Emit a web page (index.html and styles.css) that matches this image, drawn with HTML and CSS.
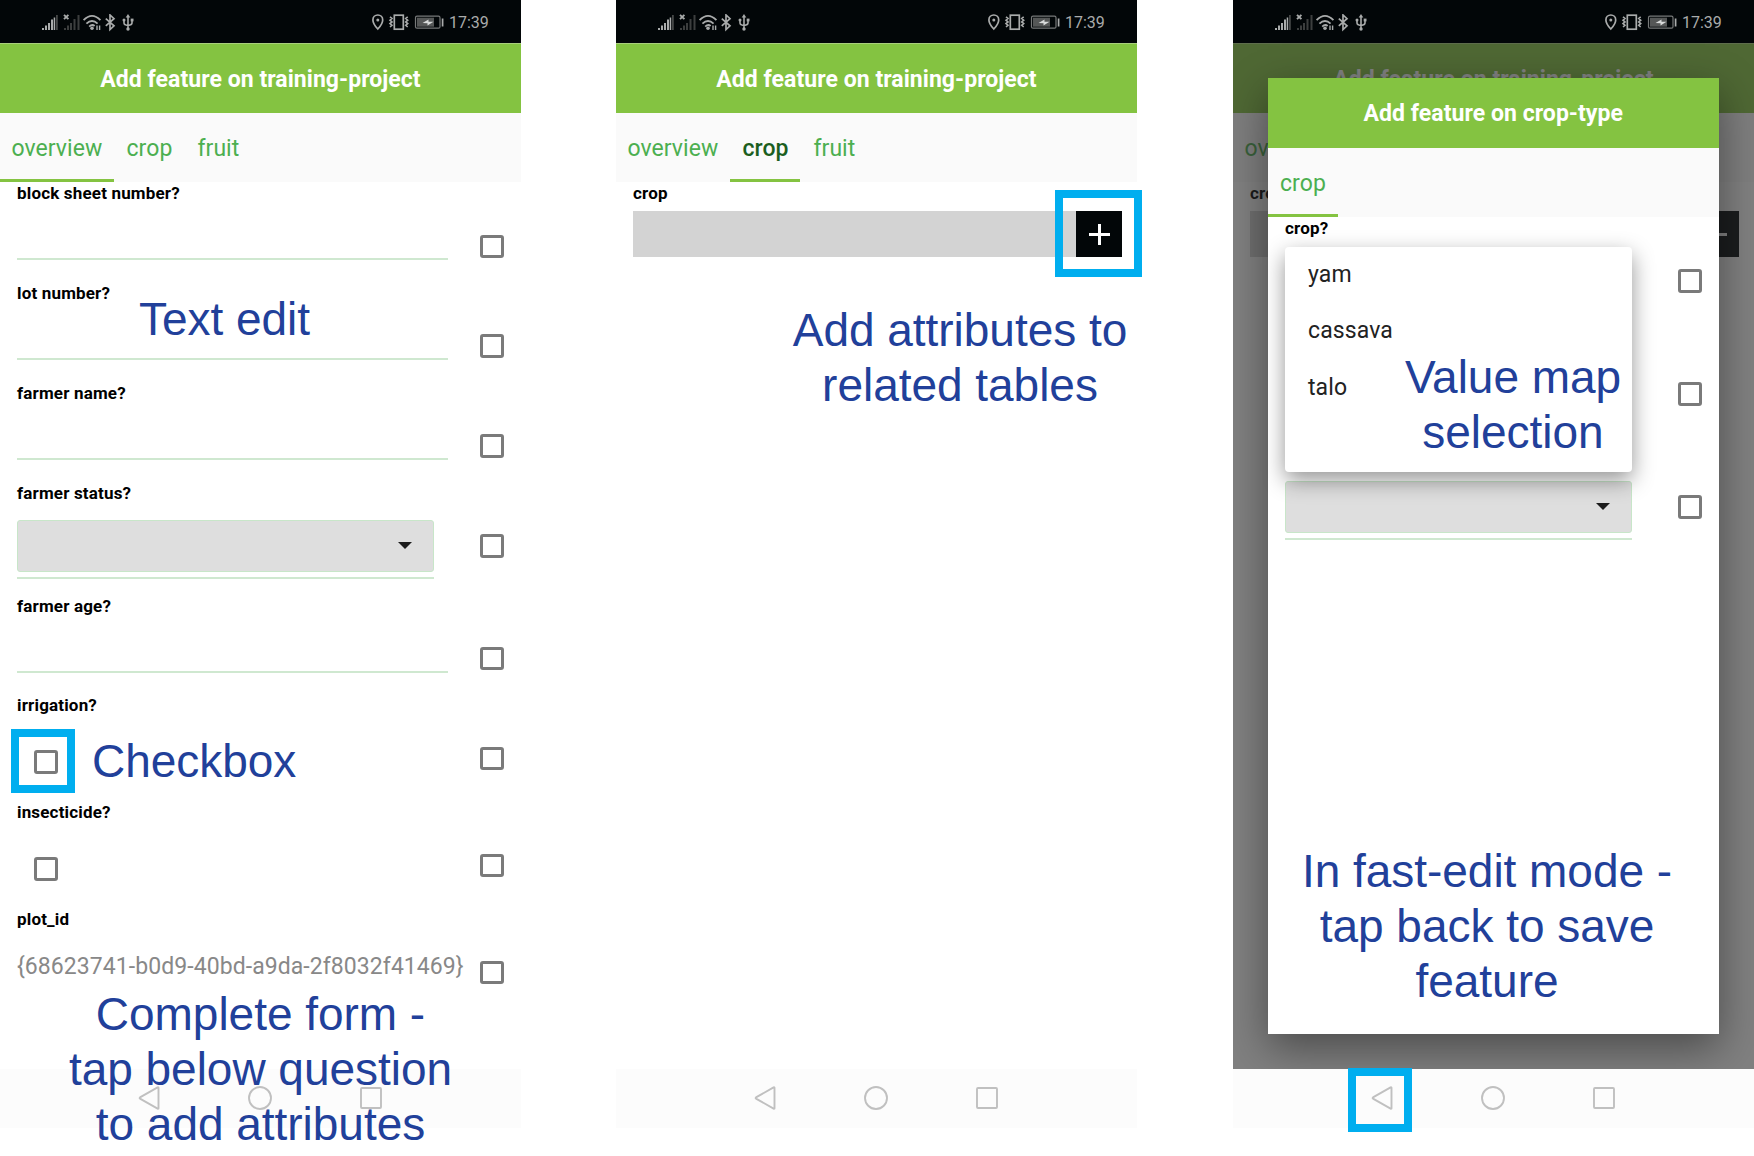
FILE: index.html
```html
<!DOCTYPE html>
<html lang="en">
<head>
<meta charset="utf-8">
<title>Add feature forms</title>
<link rel="stylesheet" href="styles.css">
</head>
<body>
<svg class="defs" aria-hidden="true">
  <symbol id="status-left" viewBox="0 0 96 18">
    <g fill="#a9abab">
      <rect x="0" y="14" width="2" height="2"/><rect x="3" y="11.5" width="2" height="4.500"/><rect x="6" y="9" width="2" height="7"/><rect x="9" y="5.500" width="2" height="10.500"/>
      <rect x="11.700" y="3.500" width="1.500" height="12.500"/>
    </g>
    <rect x="14" y="1" width="1.800" height="15" fill="#454747"/>
    <g fill="#3c3e3e">
      <rect x="22" y="14" width="2" height="2"/><rect x="25" y="11.500" width="2" height="4.500"/><rect x="28" y="9" width="2" height="7"/><rect x="31.500" y="5" width="2" height="11"/><rect x="35.500" y="1" width="2" height="15"/>
    </g>
    <g fill="none" stroke="#a9abab" stroke-width="1.600">
      <path d="M22 .8l4.400 4.400M26.400 .8L22 5.200" stroke-width="1.900"/>
      <path d="M41.600 6.200q8.400-8.600 16.800 0M44.400 9.600q5.600-5.200 11.200 0M47.200 12.600q3-2.800 5.400-.6" stroke-width="1.900"/>
      <path d="M55 11.600v4.400M57.600 11.600v4.400" stroke-width="1.400"/>
      <path d="M63.800 4.600l8.200 7.200-4 3.700V1l4 3.700-8.200 7.200" stroke-width="1.700"/>
      <path d="M86 2v13M82 5v4q0 2 4 2.500 4-.5 4-2.500V5"/>
    </g>
    <g fill="#a9abab"><circle cx="50" cy="14.200" r="1.800"/><path d="M86 0l2.300 3.400h-4.600z"/><circle cx="82" cy="6" r="1.500"/><rect x="88.700" y="4.600" width="2.800" height="2.800"/><circle cx="86" cy="15" r="1.700"/></g>
  </symbol>
  <symbol id="status-right" viewBox="0 0 72 18">
    <g fill="none" stroke="#a9abab" stroke-width="1.700">
      <path d="M5.800 15Q.9 9.700.9 5.900a4.900 4.900 0 0 1 9.800 0q0 3.800-4.900 9.100z"/>
      <rect x="22.300" y="1.200" width="9" height="14"/>
      <path d="M18 2.800l2 1.700-2 1.700 2 1.700-2 1.700 2 1.700-2 1.700M35.700 2.800l-2 1.700 2 1.700-2 1.700 2 1.700-2 1.700 2 1.700" stroke-width="1.600"/>
      <path d="M70.600 4.500v8"/>
    </g>
    <circle cx="5.800" cy="5.900" r="1.500" fill="#a9abab"/>
    <rect x="43.500" y="2.200" width="24.500" height="12" rx="1.500" fill="none" stroke="#777979" stroke-width="1.200"/>
    <rect x="45" y="3.700" width="17" height="9" fill="#555757"/>
    <path d="M50.500 9l6-3.600v2.300h5l-6 3.700V9.200z" fill="#d8dada"/>
  </symbol>
  <symbol id="nav-back" viewBox="0 0 26 26"><path d="M21.500 2.800v20.400q0 .9-.9.400L3 13.600q-.8-.6 0-1.200L20.600 2.400q.9-.5.9.4z"/></symbol>
  <symbol id="nav-home" viewBox="0 0 26 26"><circle cx="13" cy="13" r="11"/></symbol>
  <symbol id="nav-recent" viewBox="0 0 26 26"><rect x="3" y="3" width="20" height="20" rx="1"/></symbol>
</svg>
<main class="screens">

  <section class="phone">
    <div class="status"><svg class="status-left"><use href="#status-left"/></svg><svg class="status-right"><use href="#status-right"/></svg><span class="clock">17:39</span></div>
    <header class="title">Add feature on training-project</header>
    <nav class="tabs"><span class="tab tab-on tab-wide">overview</span><span class="tab">crop</span><span class="tab">fruit</span></nav>
    <div class="form">
      <div class="row"><div class="field"><label>block sheet number?</label><div class="line"></div></div><i class="box"></i></div>
      <div class="row"><div class="field"><label>lot number?</label><div class="line"></div></div><i class="box"></i></div>
      <div class="row"><div class="field"><label>farmer name?</label><div class="line"></div></div><i class="box"></i></div>
      <div class="row row-select"><div class="field"><label>farmer status?</label><div class="select"><i class="caret"></i></div></div><i class="box"></i></div>
      <div class="row"><div class="field"><label>farmer age?</label><div class="line"></div></div><i class="box"></i></div>
      <div class="row row-check"><div class="field"><label>irrigation?</label><i class="box box-value"></i></div><i class="box"></i></div>
      <div class="row row-check"><div class="field"><label>insecticide?</label><i class="box box-value"></i></div><i class="box"></i></div>
      <div class="row"><div class="field"><label>plot_id</label><div class="value">{68623741-b0d9-40bd-a9da-2f8032f41469}</div></div><i class="box"></i></div>
    </div>
    <footer class="navbar"><svg><use href="#nav-back"/></svg><svg><use href="#nav-home"/></svg><svg><use href="#nav-recent"/></svg></footer>
    <div class="mark mark-check"></div>
    <p class="note note-text">Text edit</p>
    <p class="note note-check">Checkbox</p>
    <p class="note note-form">Complete form -<br>tap below question<br>to add attributes</p>
  </section>

  <section class="phone">
    <div class="status"><svg class="status-left"><use href="#status-left"/></svg><svg class="status-right"><use href="#status-right"/></svg><span class="clock">17:39</span></div>
    <header class="title">Add feature on training-project</header>
    <nav class="tabs"><span class="tab tab-wide">overview</span><span class="tab tab-on tab-current">crop</span><span class="tab">fruit</span></nav>
    <div class="form">
      <div class="relation"><label>crop</label><div class="relation-bar"><b class="add"></b></div></div>
    </div>
    <footer class="navbar"><svg><use href="#nav-back"/></svg><svg><use href="#nav-home"/></svg><svg><use href="#nav-recent"/></svg></footer>
    <div class="mark mark-add"></div>
    <p class="note note-add">Add attributes to<br>related tables</p>
  </section>

  <section class="phone">
    <div class="status"><svg class="status-left"><use href="#status-left"/></svg><svg class="status-right"><use href="#status-right"/></svg><span class="clock">17:39</span></div>
    <div class="behind">
      <header class="title">Add feature on training-project</header>
      <nav class="tabs"><span class="tab tab-wide">overview</span></nav>
      <div class="form">
        <div class="relation"><label>crop</label><div class="relation-bar"><b class="add"></b></div></div>
      </div>
      <div class="scrim">
        <div class="dialog">
          <header class="title">Add feature on crop-type</header>
          <nav class="tabs"><span class="tab tab-on">crop</span></nav>
          <div class="form">
            <div class="row row-select"><div class="field"><label>crop?</label></div><i class="box"></i></div>
            <div class="row row-select"><div class="field"></div><i class="box"></i></div>
            <div class="row row-select"><div class="field"><label></label><div class="select"><i class="caret"></i></div></div><i class="box"></i></div>
          </div>
          <ul class="popup"><li>yam</li><li>cassava</li><li>talo</li></ul>
        </div>
      </div>
    </div>
    <footer class="navbar"><svg><use href="#nav-back"/></svg><svg><use href="#nav-home"/></svg><svg><use href="#nav-recent"/></svg></footer>
    <div class="mark mark-back"></div>
    <p class="note note-map">Value map<br>selection</p>
    <p class="note note-save">In fast-edit mode -<br>tap back to save<br>feature</p>
  </section>
</main>
</body>
</html>
```
FILE: styles.css
```css
* { box-sizing: border-box; }
body { margin: 0; background: #fff; font-family: Roboto, "Liberation Sans", sans-serif; overflow: hidden; height: 1156px; }
.defs { position: absolute; width: 0; height: 0; }
.screens { display: grid; grid-template-columns: 616px 617px 521px; height: 1156px; }
.phone { position: relative; display: flex; flex-direction: column; width: 521px; height: 1128px; }

/* status bar */
.status { display: flex; flex: none; height: 43px; background: #020608; padding: 13.500px 0 0 42px; }
.status-left { width: 96px; height: 18px; }
.status-right { width: 72px; height: 18px; margin-left: 233.500px; }
.clock { margin-left: 5.500px; margin-top: -1px; font-size: 16px; line-height: 19px; color: #a9abab; }

/* header and tabs */
.title { flex: none; height: 70px; border-top: 1px solid #a9cf7c; background: #84c341; color: #fff; font-size: 23px; font-weight: 700; line-height: 72px; letter-spacing: .05px; text-align: center; }
.tabs { display: flex; flex: none; height: 69px; background: #fafafa; }
.tab { width: 70px; padding-left: 12.500px; font-size: 23px; line-height: 72px; letter-spacing: .05px; color: #4caf50; border-bottom: 3px solid transparent; white-space: nowrap; }
.tab:last-child:nth-child(3) { padding-left: 13.500px; }
.tab-wide { width: 114px; padding-left: 11.500px; }
.tab-on { border-bottom-color: #84c341; }
.tab-current { color: #1b5e20; font-weight: 500; }

/* form rows */
.form { flex: 1; padding-top: .400px; }
label { display: block; height: 23px; font-size: 17px; font-weight: 700; line-height: 22px; letter-spacing: .17px; color: #000; white-space: nowrap; }
.row { display: flex; justify-content: space-between; height: 99.800px; padding: 0 17.500px 0 17px; }
.row-select { height: 112.900px; }
.row-check { height: 107px; }
.field { flex: none; width: 417px; }
.line { width: 431px; height: 55px; border-bottom: 2px solid #cfe8d0; }
.box { flex: none; display: block; width: 23.500px; height: 23.500px; margin-top: 52.300px; border: 3px solid #7a7a7a; border-radius: 3px; }
.box-value { margin: 33px 0 0 17px; }
.value { margin-top: 20.400px; font-size: 23px; line-height: 29px; letter-spacing: .07px; color: #888; white-space: nowrap; }
.select { position: relative; display: flex; align-items: center; justify-content: flex-end; height: 52px; margin-top: 15px; padding-right: 21px; background: #dedede; border: 1px solid #c8e6c9; border-radius: 3px; }
.select::after { content: ""; position: absolute; left: -1px; right: -1px; top: 56px; height: 2px; background: #cfe8d0; }
.caret { border: 7px solid transparent; border-top-color: #1c1c1c; border-bottom: 0; }

/* relation field */
.relation { padding: 0 15px 0 17px; }
.relation-bar { display: flex; justify-content: flex-end; margin-top: 5.500px; height: 46.500px; background: #d3d3d3; }
.add { display: grid; place-items: center; width: 46px; background: #020608; }
.add::before, .add::after { content: ""; grid-area: 1 / 1; width: 21px; height: 3px; background: #fff; }
.add::after { transform: rotate(90deg); }

/* bottom bar */
.navbar { display: flex; flex: none; align-items: center; justify-content: center; gap: 84.500px; height: 59px; padding: 0 1px 1px 0; background: #fcfcfc; }
.navbar svg { width: 26px; height: 26px; fill: none; stroke: #c0c0c0; stroke-width: 1.900; }

/* dialog over the dimmed form */
.behind { position: relative; display: flex; flex: 1; flex-direction: column; overflow: hidden; }
.scrim { position: absolute; inset: 0; padding: 35px 35px 35px 34.500px; background: rgba(45, 45, 45, .604); }
.dialog { position: relative; display: flex; flex-direction: column; height: 100%; background: #fff; box-shadow: 0 14px 40px rgba(0, 0, 0, .42); }
.dialog .title { border-top: 0; }
.dialog .field { width: 347px; }
.dialog .row { padding-left: 17.500px; }
.dialog .form { padding-top: 0; }
.popup { position: absolute; left: 17.500px; top: 168.500px; width: 347px; height: 225.500px; margin: 0; padding: 0 0 0 23px; list-style: none; background: #fff; border-radius: 4px; box-shadow: 0 8px 22px rgba(0, 0, 0, .42); font-size: 23px; line-height: 56.800px; letter-spacing: .1px; color: #222; }

/* annotations */
.mark { position: absolute; border: 8px solid #00aeef; }
.mark-check { left: 10.500px; top: 728.500px; width: 64.500px; height: 64.500px; }
.mark-add { left: 439px; top: 190px; width: 86.500px; height: 86.500px; }
.mark-back { left: 115px; top: 1068px; width: 64px; height: 64px; }
.note { position: absolute; margin: 0; font: 46px/55px "Liberation Sans", Arial, sans-serif; letter-spacing: -.03px; color: #21409a; text-align: center; white-space: nowrap; }
.note-text { left: 139px; top: 292px; }
.note-check { left: 92px; top: 734px; }
.note-form { left: 60.500px; width: 400px; top: 987px; }
.note-add { left: 144px; width: 400px; top: 303px; }
.note-map { left: 130px; width: 300px; top: 350px; }
.note-save { left: 54px; width: 400px; top: 844px; }
```
